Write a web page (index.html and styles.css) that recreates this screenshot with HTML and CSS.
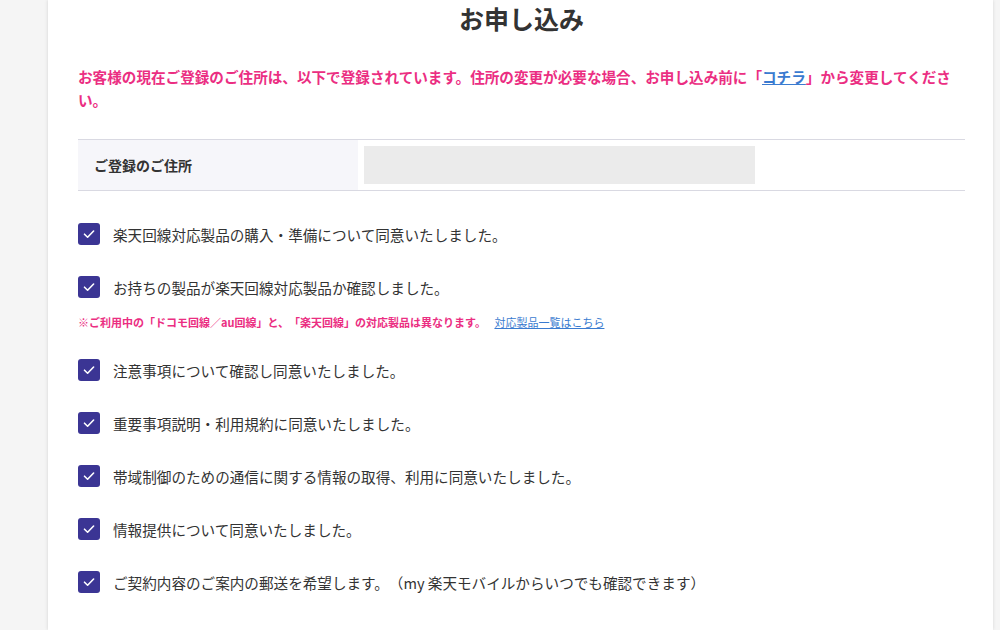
FILE: index.html
```html
<!DOCTYPE html>
<html lang="ja">

<head>
    <meta charset="utf-8">
    <link rel="stylesheet" href="styles.css">
</head>

<body>

    <div class="apply-page">
        <div class="apply-card">
            <h1 class="apply-title">お申し込み</h1>

            <p class="apply-notice">
                お客様の現在ご登録のご住所は、以下で登録されています。住所の変更が必要な場合、お申し込み前に「<a href="#0">コチラ</a>」から変更してください。
            </p>

            <div class="apply-address">
                <div class="apply-address-label">ご登録のご住所</div>
                <div class="apply-address-value">
                    <div class="apply-address-box"></div>
                </div>
            </div>

            <div class="apply-checks">
                <label class="apply-check">
                    <span class="apply-box"><svg viewBox="0 0 22 22"><path d="M6.5 11.2 L9.6 14.2 L15.6 8" /></svg></span>
                    <span>楽天回線対応製品の購入・準備について同意いたしました。</span>
                </label>
                <label class="apply-check">
                    <span class="apply-box"><svg viewBox="0 0 22 22"><path d="M6.5 11.2 L9.6 14.2 L15.6 8" /></svg></span>
                    <span>お持ちの製品が楽天回線対応製品か確認しました。</span>
                </label>
                <p class="apply-note">
                    <span class="apply-note-text">※ご利用中の「ドコモ回線／au回線」と、「楽天回線」の対応製品は異なります。</span>
                    <a href="#0">対応製品一覧はこちら</a>
                </p>
                <label class="apply-check">
                    <span class="apply-box"><svg viewBox="0 0 22 22"><path d="M6.5 11.2 L9.6 14.2 L15.6 8" /></svg></span>
                    <span>注意事項について確認し同意いたしました。</span>
                </label>
                <label class="apply-check">
                    <span class="apply-box"><svg viewBox="0 0 22 22"><path d="M6.5 11.2 L9.6 14.2 L15.6 8" /></svg></span>
                    <span>重要事項説明・利用規約に同意いたしました。</span>
                </label>
                <label class="apply-check">
                    <span class="apply-box"><svg viewBox="0 0 22 22"><path d="M6.5 11.2 L9.6 14.2 L15.6 8" /></svg></span>
                    <span>帯域制御のための通信に関する情報の取得、利用に同意いたしました。</span>
                </label>
                <label class="apply-check">
                    <span class="apply-box"><svg viewBox="0 0 22 22"><path d="M6.5 11.2 L9.6 14.2 L15.6 8" /></svg></span>
                    <span>情報提供について同意いたしました。</span>
                </label>
                <label class="apply-check">
                    <span class="apply-box"><svg viewBox="0 0 22 22"><path d="M6.5 11.2 L9.6 14.2 L15.6 8" /></svg></span>
                    <span>ご契約内容のご案内の郵送を希望します。（my 楽天モバイルからいつでも確認できます）</span>
                </label>
            </div>
        </div>
    </div>

</body>

</html>
```

FILE: styles.css
```css
html,
body {
    margin: 0;
    padding: 0;
    height: 100%;
    overflow: hidden;
}

body {
    background-color: #f5f5f5;
    font-family: "Noto Sans CJK JP", "Noto Sans", sans-serif;
    color: #333333;
    text-spacing-trim: space-all;
}

.apply-page {
    padding-left: 48px;
    padding-right: 7px;
    height: 100%;
}

/* White card */
.apply-card {
    background-color: #ffffff;
    height: 100%;
    padding: 0 28px 0 30px;
    box-shadow: -1px 0 3px rgba(0, 0, 0, 0.08), 1px 0 3px rgba(0, 0, 0, 0.06);
}

.apply-title {
    margin: 0;
    font-size: 25px;
    line-height: 36px;
    font-weight: bold;
    text-align: center;
    color: #333333;
}

/* Pink notice */
.apply-notice {
    margin: 29px 0 0 0;
    font-size: 14.6px;
    line-height: 23px;
    font-weight: bold;
    color: #eb2e82;
}

.apply-notice a {
    color: #3a7bd0;
    text-decoration: underline;
}

/* Address table */
.apply-address {
    display: flex;
    margin-top: 28px;
    border-top: 1px solid #d9d9e2;
    border-bottom: 1px solid #d9d9e2;
    height: 50px;
}

.apply-address-label {
    width: 280px;
    background-color: #f6f6fa;
    display: flex;
    align-items: center;
    padding-left: 16px;
    box-sizing: border-box;
    font-size: 14px;
    font-weight: bold;
}

.apply-address-value {
    padding: 6px 0 6px 6px;
}

.apply-address-box {
    width: 391px;
    height: 38px;
    background-color: #ebebeb;
}

/* Checkboxes */
.apply-checks {
    display: flex;
    flex-direction: column;
    padding-top: 32px;
}

.apply-check {
    display: flex;
    align-items: center;
    height: 22px;
    font-size: 14.6px;
    color: #333333;
    margin-bottom: 31px;
    cursor: pointer;
}

.apply-box {
    width: 22px;
    height: 22px;
    border-radius: 3px;
    background-color: #3b3594;
    margin-right: 13px;
    flex-shrink: 0;
}

.apply-box svg {
    display: block;
    width: 22px;
    height: 22px;
    fill: none;
    stroke: #ffffff;
    stroke-width: 1.6;
    stroke-linecap: round;
    stroke-linejoin: round;
}

/* Note under second check */
.apply-note {
    margin: -15px 0 29px 0;
    font-size: 11px;
    line-height: 16px;
}

.apply-note-text {
    color: #eb2e82;
    font-weight: bold;
    margin-right: 6px;
}

.apply-note a {
    color: #3a7bd0;
    text-decoration: underline;
}
```
